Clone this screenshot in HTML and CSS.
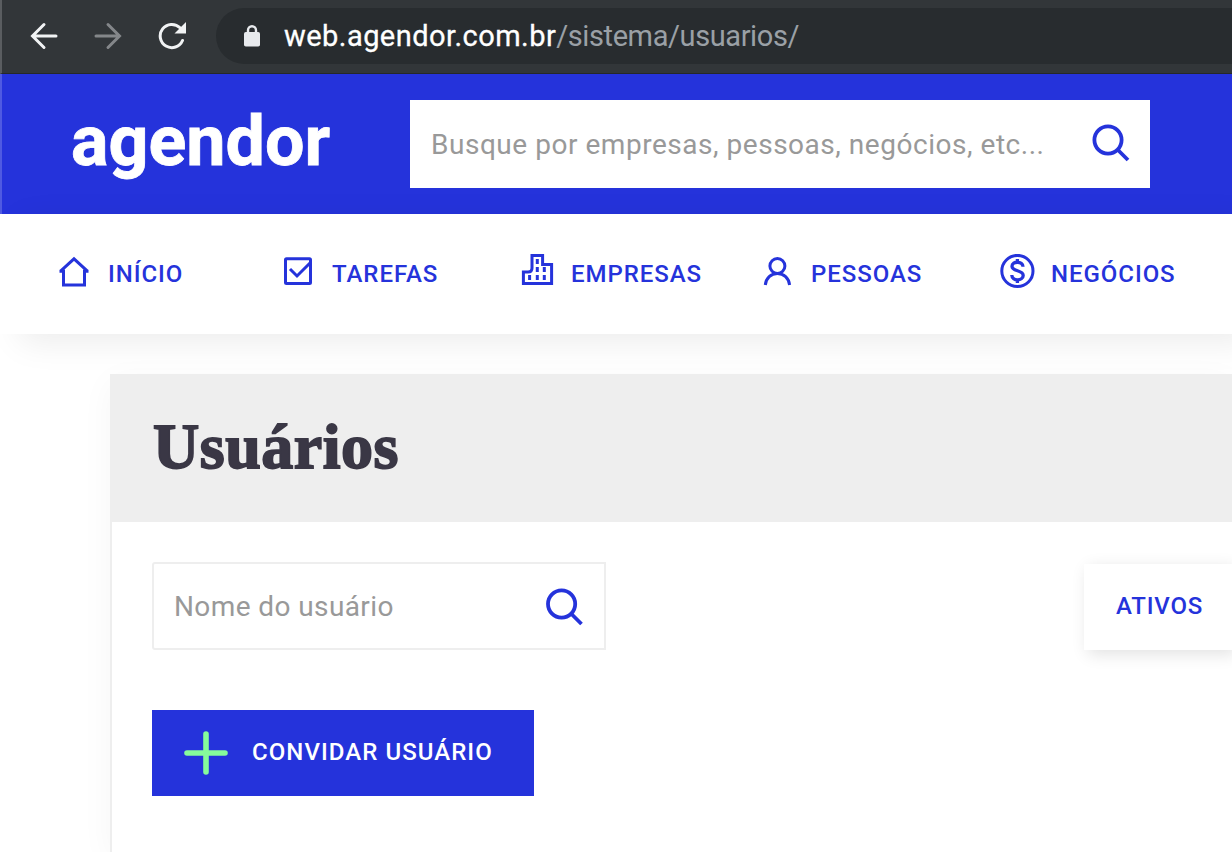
FILE: index.html
```html
<!DOCTYPE html>
<html lang="pt-BR">
<head>
    <meta charset="utf-8">
    <title>Agendor - Usuários</title>
    <link rel="stylesheet" href="styles.css">
</head>
<body>
    <div class="browser-bar">
        <svg class="back" width="28" height="28" viewBox="0 0 28 28"><path d="M26 14H3M14 2.500L2.500 14L14 25.500"/></svg>
        <svg class="forward" width="28" height="28" viewBox="0 0 28 28"><path d="M2 14H25M14 2.500L25.500 14L14 25.500"/></svg>
        <svg class="reload" width="28" height="28" viewBox="0 0 28 28">
            <path d="M24.500 18.500A11.600 11.600 0 1 1 22 5.800"/>
            <path class="tip" d="M28 0V11.500H16.500Z"/>
        </svg>
        <div class="address">
            <svg class="lock" width="16" height="22" viewBox="0 0 16 22">
                <rect x="0" y="7" width="16" height="14.500" rx="1.800"/>
                <path d="M4 8V5.200A4 4 0 0 1 12 5.200V8"/>
            </svg>
            <span class="url"><b>web.agendor.com.br</b><i>/sistema/usuarios/</i></span>
        </div>
    </div>

    <header>
        <div class="logo">agendor</div>
        <div class="search">
            <span class="search-hint">Busque por empresas, pessoas, negócios, etc...</span>
            <svg class="magnifier" width="38" height="38" viewBox="0 0 38 38"><circle cx="16" cy="16" r="13.600"/><path d="M25.500 25.500L36 36"/></svg>
        </div>
    </header>

    <nav>
        <a>
            <svg width="36" height="36" viewBox="0 0 36 36"><path d="M3.500 17.300H7.500V31H28.500V17.300H32.500M4.300 17.300L18 4.800L31.700 17.300"/></svg>
            <span>INÍCIO</span>
        </a>
        <a>
            <svg width="36" height="36" viewBox="0 0 36 36"><rect x="5.500" y="4.800" width="25" height="24.700" rx="1"/><path d="M10 15L17 22L30 9"/></svg>
            <span>TAREFAS</span>
        </a>
        <a>
            <svg width="36" height="36" viewBox="0 0 36 36">
                <path d="M4.400 29.600V18H9Q13 18 13 14V1.400H23.600V10.400H32.600V29.600Z"/>
                <path class="windows" d="M18.300 5V10M18.300 13V18M25.300 13V18M10.600 21V26M18.300 21V26M25.300 21V26"/>
            </svg>
            <span>EMPRESAS</span>
        </a>
        <a>
            <svg width="36" height="36" viewBox="-1 0 36 36"><circle cx="17.400" cy="12" r="7.500"/><path d="M5.300 31C6 24 11 19.500 17.400 19.500S28.800 24 29.600 31"/></svg>
            <span>PESSOAS</span>
        </a>
        <a>
            <svg width="36" height="36" viewBox="-1 0 36 36">
                <circle cx="17.400" cy="17" r="15.600"/>
                <path class="dollar" d="M17.400 5V8.500M17.400 25.500V29M23 12.800C23 6.800 12 6.800 12 12.300C12 18 23.200 15.500 23.200 21.500C23.200 27.300 11.800 27.300 11.800 21"/>
            </svg>
            <span>NEGÓCIOS</span>
        </a>
    </nav>

    <main>
        <h1>Usuários</h1>
        <div class="filters">
            <div class="user-search">
                <span class="search-hint">Nome do usuário</span>
                <svg class="magnifier" width="38" height="38" viewBox="0 0 38 38"><circle cx="15.600" cy="16" r="13.600"/><path d="M25 25.500L35.500 36"/></svg>
            </div>
            <div class="status"><span>ATIVOS</span></div>
        </div>
        <div class="invite">
            <svg width="44" height="44" viewBox="0 0 44 44"><path d="M22 3V41M3 22H41"/></svg>
            <span>CONVIDAR USUÁRIO</span>
        </div>
    </main>
</body>
</html>
```
FILE: styles.css
```css
/* Base styles */
* {
    box-sizing: border-box;
}
body {
    margin: 0;
    height: 852px;
    overflow: hidden;
    background-color: #fff;
    font-family: Roboto, sans-serif;
    display: flex;
    flex-direction: column;
}
svg {
    flex: none;
    fill: none;
    stroke: #2533db;
    stroke-width: 3;
}
span {
    white-space: nowrap;
}

/* Browser bar */
.browser-bar {
    flex: none;
    display: flex;
    align-items: center;
    height: 74px;
    padding: 0 0 2px 28px;
    background-color: #323639;
    border-left: 2px solid #5a5d60;
    border-bottom: 1px solid #25282a;
}
.browser-bar svg {
    stroke: #f1f3f4;
    stroke-linecap: round;
}
.browser-bar .forward {
    margin-left: 36px;
    stroke: #84878a;
}
.browser-bar .reload {
    margin-left: 36px;
}
.reload .tip {
    fill: #f1f3f4;
    stroke: none;
}
.address {
    display: flex;
    align-items: center;
    flex: 1;
    height: 56px;
    margin-left: 30px;
    padding-left: 28px;
    border-radius: 28px 0 0 28px;
    background-color: #282c2f;
}
.address .lock {
    fill: #e8eaed;
    stroke: #e8eaed;
    stroke-width: 0;
}
.lock path {
    fill: none;
    stroke-width: 2.4;
}
.url {
    margin-left: 24px;
    font-size: 29px;
    line-height: 34px;
}
.url b {
    color: #fff;
    font-weight: 400;
    letter-spacing: 0.45px;
    -webkit-text-stroke: 0.3px #fff;
}
.url i {
    color: #9aa0a6;
    font-style: normal;
    letter-spacing: -0.4px;
}

/* Header */
header {
    flex: none;
    display: flex;
    align-items: center;
    height: 140px;
    padding-left: 69px;
    background-color: #2533db;
    border-left: 2px solid #4f5ae2;
}
.logo {
    width: 339px;
    padding-bottom: 6px;
    color: #fff;
    font-size: 70px;
    font-weight: 700;
    line-height: 80px;
    -webkit-text-stroke: 0.8px #fff;
}
.search {
    display: flex;
    align-items: center;
    justify-content: space-between;
    width: 740px;
    height: 88px;
    padding: 0 20px 0 21px;
    background-color: #fff;
}
.search .magnifier {
    margin-bottom: 2px;
}
.search-hint {
    color: #999;
    font-size: 28px;
    letter-spacing: 0.4px;
}
.search .search-hint {
    letter-spacing: 0.53px;
}
.magnifier {
    stroke-width: 3.8;
}

/* Navigation */
nav {
    flex: none;
    display: grid;
    grid-template-columns: 224px 239px 240px 240px auto;
    height: 120px;
    padding: 40px 0 0 56px;
    background-color: #fff;
    box-shadow: 20px 8px 32px rgba(0, 0, 0, 0.08);
}
nav a {
    display: flex;
    gap: 16px;
    height: 36px;
    color: #2533db;
    font-size: 24px;
    font-weight: 500;
    letter-spacing: 0.95px;
    line-height: 40px;
}
nav .windows {
    stroke-width: 3;
}
nav .dollar {
    stroke-width: 3.3;
}

/* Users panel */
main {
    flex: 1;
    margin: 40px 0 0 110px;
    border-left: 2px solid #eee;
    box-shadow: 0 8px 32px rgba(0, 0, 0, 0.04);
}
h1 {
    height: 148px;
    margin: 0;
    padding-left: 41px;
    background-color: #eee;
    color: #3a3745;
    font-family: "Liberation Serif", serif;
    font-size: 64px;
    font-weight: 700;
    letter-spacing: 0.5px;
    line-height: 145px;
    -webkit-text-stroke: 1.8px #3a3745;
}
.filters {
    display: flex;
    justify-content: space-between;
    padding: 40px 0 0 40px;
}
.user-search {
    display: flex;
    align-items: center;
    justify-content: space-between;
    width: 454px;
    height: 88px;
    padding: 1px 20px 0 20px;
    border: 2px solid #eee;
    border-radius: 3px 0 0 3px;
}
.status {
    width: 148px;
    height: 86px;
    margin-top: 2px;
    padding-left: 32px;
    color: #2533db;
    font-size: 24px;
    font-weight: 500;
    letter-spacing: 0.8px;
    line-height: 84px;
    box-shadow: 4px 4px 16px rgba(0, 0, 0, 0.12);
}
.invite {
    display: flex;
    align-items: center;
    gap: 24px;
    width: 382px;
    height: 86px;
    margin: 60px 0 0 40px;
    padding-left: 32px;
    background-color: #2533db;
    color: #fff;
    font-size: 24px;
    font-weight: 500;
    letter-spacing: 1.05px;
}
.invite span {
    padding-bottom: 2px;
}
.invite svg {
    stroke: #86fc9b;
    stroke-width: 5.6;
    stroke-linecap: round;
}
```
